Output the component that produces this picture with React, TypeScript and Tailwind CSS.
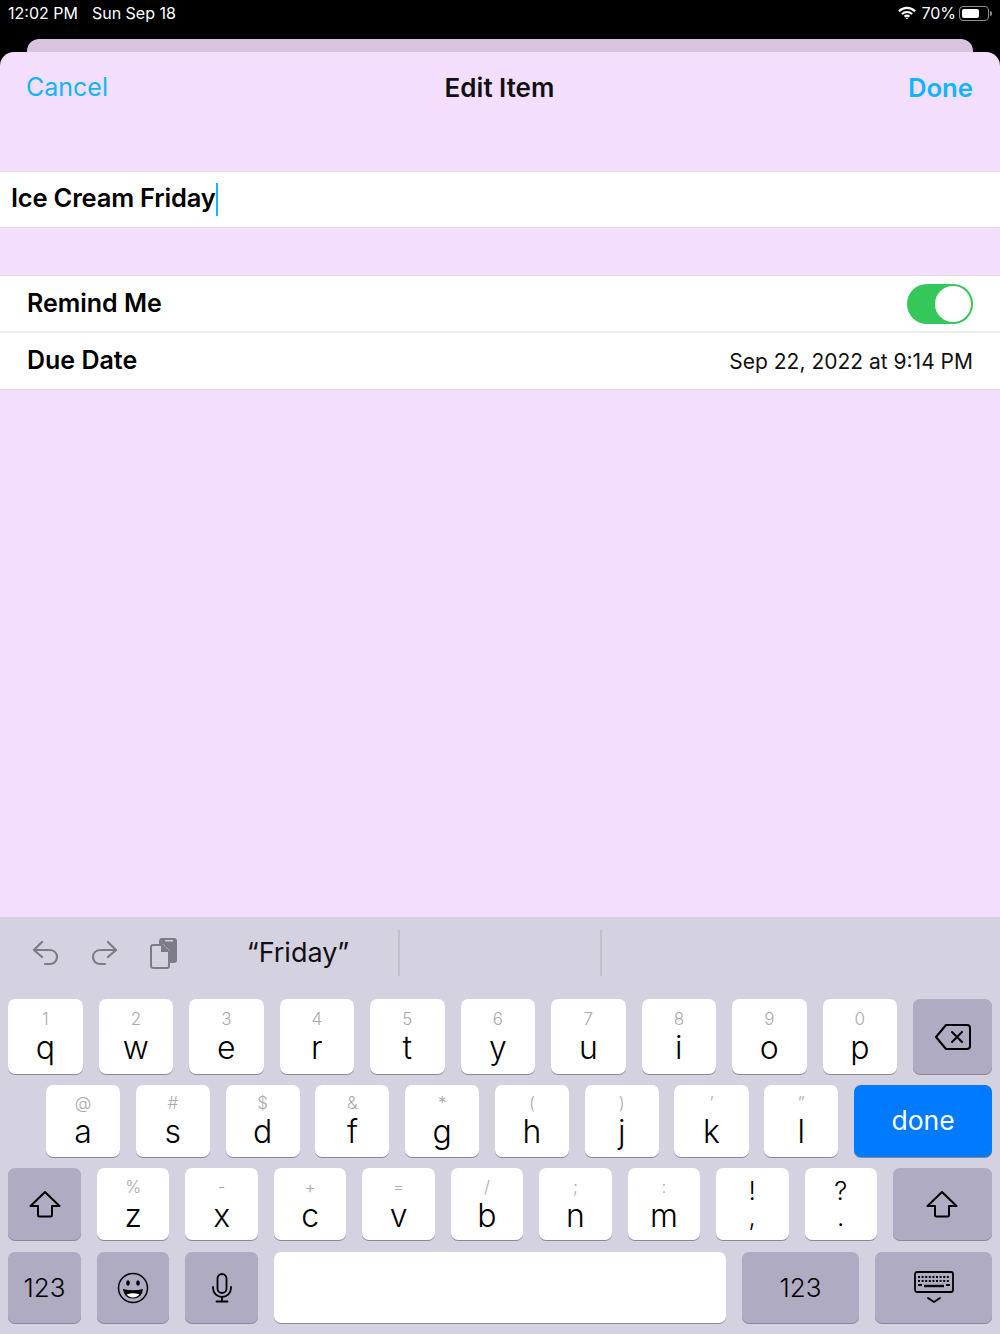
import { ReactNode } from "react";

const row1 = [["1", "q"], ["2", "w"], ["3", "e"], ["4", "r"], ["5", "t"], ["6", "y"], ["7", "u"], ["8", "i"], ["9", "o"], ["0", "p"]];
const row2 = [["@", "a"], ["#", "s"], ["$", "d"], ["&", "f"], ["*", "g"], ["(", "h"], [")", "j"], ["’", "k"], ["”", "l"]];
const row3 = [["%", "z"], ["-", "x"], ["+", "c"], ["=", "v"], ["/", "b"], [";", "n"], [":", "m"]];

function LetterKey({ hint, letter, box }: { hint: string; letter: string; box: string }) {
  return (
    <div className={`flex-1 ${box} bg-white rounded-[7px] shadow-[0_1px_0_#8a8898] flex flex-col items-center`}>
      <span className="text-[17px] leading-[22px] font-light text-[#a9a9ae]">{hint}</span>
      <span className="text-[32px] leading-[35px] font-light text-black">{letter}</span>
    </div>
  );
}

function GrayKey({ className, children }: { className: string; children: ReactNode }) {
  return (
    <div className={`${className} bg-[#aeabc2] rounded-[7px] shadow-[0_1px_0_#8a8898] flex items-center justify-center text-black`}>
      {children}
    </div>
  );
}

function ShiftIcon() {
  return (
    <svg width="32" height="28" viewBox="0 0 32 28" fill="none" stroke="#000" strokeWidth="2" strokeLinejoin="round">
      <path d="M16 2 L30.5 16 H23 V25 Q23 26.5 21.5 26.5 H10.5 Q9 26.5 9 25 V16 H1.5 Z" />
    </svg>
  );
}

export default function App() {
  return (
    <div className="w-[1000px] h-[1334px] overflow-hidden flex flex-col bg-black font-['Inter',sans-serif]">
      {/* status bar */}
      <div className="h-[26px] flex items-center justify-between pl-[8px] pr-[8px] text-white text-[16px]">
        <div className="flex gap-[14px]">
          <span>12:02 PM</span>
          <span>Sun Sep 18</span>
        </div>
        <div className="flex items-center gap-[5px]">
          <svg width="18" height="14" viewBox="0 0 18 14" fill="none" stroke="#fff" strokeWidth="2.2">
            <path d="M1 5.2 C5.5 0.8 12.5 0.8 17 5.2" />
            <path d="M3.9 8 C6.9 5.4 11.1 5.4 14.1 8" />
            <path d="M6.6 10.6 C8 9.5 10 9.5 11.4 10.6" />
            <circle cx="9" cy="12.4" r="0.8" fill="#fff" stroke="none" />
          </svg>
          <span className="mr-[-2px]">70%</span>
          <div className="flex items-center gap-[1px]">
            <div className="w-[30px] h-[15px] border border-[#8e8e8e] rounded-[4px] p-[2px]">
              <div className="w-[70%] h-full bg-white rounded-[2px]" />
            </div>
            <div className="w-[2px] h-[5px] bg-[#8e8e8e] rounded-r-[2px]" />
          </div>
        </div>
      </div>
      <div className="h-[13px]" />

      {/* card behind */}
      <div className="h-[13px] mx-[27px] bg-[#d8c4e0] rounded-t-[12px]" />

      {/* sheet */}
      <div className="flex-1 flex flex-col bg-[#f3dffd] rounded-t-[14px]">
        <div className="h-[119px] pl-[26px] pr-[27px] pt-[19px] flex items-start text-[25px] leading-[33px]">
          <span className="flex-1 text-[#10b5fe]">Cancel</span>
          <span className="font-semibold text-[#111] text-[26px]">Edit Item</span>
          <span className="flex-1 text-right font-semibold text-[25.7px] text-[#10b5fe]">Done</span>
        </div>

        <div className="h-[57px] bg-white border-y border-[#e6dbe9] flex items-center pl-[11px] pb-[2px]">
          <span className="text-[25.5px] font-semibold text-black tracking-[-0.2px]">Ice Cream Friday</span>
          <div className="w-[2px] h-[33px] bg-[#10b5fe] mt-[2px]" />
        </div>

        <div className="h-[47px]" />

        <div className="bg-white border-y border-[#e0d6e4]">
          <div className="h-[57px] pt-[1px] flex items-center justify-between px-[27px] border-b-2 border-[#ececec]">
            <span className="text-[25px] font-semibold text-black">Remind Me</span>
            <div className="w-[66px] h-[40px] rounded-full bg-[#34c759] flex items-center justify-end pr-[2px]">
              <div className="w-[36px] h-[36px] rounded-full bg-white" />
            </div>
          </div>
          <div className="h-[56px] flex items-center justify-between px-[27px]">
            <span className="text-[25px] font-semibold text-black">Due Date</span>
            <span className="text-[21px] text-[#111] mt-[1px]">Sep 22, 2022 at 9:14 PM</span>
          </div>
        </div>

        <div className="flex-1" />

        {/* keyboard */}
        <div className="h-[417px] bg-[#d4d2e0] flex flex-col">
          <div className="h-[82px] shrink-0 flex items-center pb-[10px]">
            <div className="w-[198px] pl-[32px] flex items-center gap-[32px]">
              <svg width="27" height="26" viewBox="0 0 27 26" fill="none" stroke="#7d7c85" strokeWidth="2.2" strokeLinecap="round" strokeLinejoin="round">
                <path d="M10 2 L2 10 L10 17" />
                <path d="M2 10 H17 C22 10 25 13 25 17 C25 21 22 24 18 24 H13" />
              </svg>
              <svg width="27" height="26" viewBox="0 0 27 26" fill="none" stroke="#7d7c85" strokeWidth="2.2" strokeLinecap="round" strokeLinejoin="round">
                <path d="M17 2 L25 10 L17 17" />
                <path d="M25 10 H10 C5 10 2 13 2 17 C2 21 5 24 9 24 H14" />
              </svg>
              <svg width="28" height="32" viewBox="0 0 28 32">
                <path d="M9 5 Q9 1 12 1 H24 Q27 1 27 4 V23 Q27 26 24 26 H20 V14 L13 7 H9 Z" fill="#7d7c85" />
                <rect x="15" y="3" width="8" height="1.5" fill="#d4d2e0" />
                <path d="M3 8 H12 L19 15 V29 Q19 31 17 31 H4 Q1 31 1 29 V10 Q1 8 3 8 Z" fill="none" stroke="#7d7c85" strokeWidth="2" />
                <path d="M11 8 V15 H19 Z" fill="#7d7c85" />
              </svg>
            </div>
            <div className="w-[200px] text-center text-[27px] text-[#111]">“Friday”</div>
            <div className="w-[2px] h-[46px] bg-[#c0bfca]" />
            <div className="w-[200px]" />
            <div className="w-[2px] h-[46px] bg-[#c0bfca]" />
          </div>

          <div className="flex-1 flex flex-col gap-[11px] px-[8px] pb-[11px]">
            <div className="flex gap-[15.8px]">
              {row1.map(([hint, letter]) => (
                <LetterKey key={letter} hint={hint} letter={letter} box="h-[75px] pt-[9px]" />
              ))}
              <GrayKey className="w-[79px] h-[75px]">
                <svg width="38" height="28" viewBox="0 0 38 28" fill="none" stroke="#000" strokeWidth="2" strokeLinejoin="round" strokeLinecap="round">
                  <path d="M12 2 H33 Q36 2 36 5 V23 Q36 26 33 26 H12 L2 14 Z" />
                  <path d="M18 9 L28 19 M28 9 L18 19" />
                </svg>
              </GrayKey>
            </div>
            <div className="flex gap-[15.7px] pl-[38px]">
              {row2.map(([hint, letter]) => (
                <LetterKey key={letter} hint={hint} letter={letter} box="h-[72px] pt-[7px]" />
              ))}
              <div className="w-[138px] h-[72px] bg-[#007aff] rounded-[7px] shadow-[0_1px_0_#8a8898] flex items-center justify-center text-white text-[26.5px]">
                done
              </div>
            </div>
            <div className="flex gap-[16px]">
              <GrayKey className="w-[73px] h-[72px]"><ShiftIcon /></GrayKey>
              {row3.map(([hint, letter]) => (
                <LetterKey key={letter} hint={hint} letter={letter} box="h-[72px] pt-[8px]" />
              ))}
              <div className="flex-1 h-[72px] bg-white rounded-[7px] shadow-[0_1px_0_#8a8898] flex flex-col items-center justify-center font-light text-black text-[26px] leading-[26px]">
                <span>!</span>
                <span>,</span>
              </div>
              <div className="flex-1 h-[72px] bg-white rounded-[7px] shadow-[0_1px_0_#8a8898] flex flex-col items-center justify-center font-light text-black text-[26px] leading-[26px]">
                <span>?</span>
                <span>.</span>
              </div>
              <GrayKey className="w-[99px] h-[72px]"><ShiftIcon /></GrayKey>
            </div>
            <div className="flex gap-[16px] mt-[1px]">
              <GrayKey className="w-[73px] h-[71px] text-[26px] font-light">123</GrayKey>
              <GrayKey className="w-[72px] h-[71px]">
                <svg width="32" height="32" viewBox="0 0 32 32" fill="none" stroke="#000" strokeWidth="1.5">
                  <circle cx="16" cy="16" r="14.5" />
                  <ellipse cx="11" cy="11" rx="1.8" ry="2.8" fill="#000" stroke="none" />
                  <ellipse cx="21" cy="11" rx="1.8" ry="2.8" fill="#000" stroke="none" />
                  <path d="M6 17 Q16 19.5 26 17 Q25 26.5 16 26.5 Q7 26.5 6 17 Z" fill="#000" stroke="none" />
                  <path d="M9.5 22.5 Q16 20 22.5 22.5 Q20 25.5 16 25.5 Q12 25.5 9.5 22.5 Z" fill="#fff" stroke="none" />
                </svg>
              </GrayKey>
              <GrayKey className="w-[73px] h-[71px]">
                <svg width="20" height="30" viewBox="0 0 20 30" fill="none" stroke="#000" strokeWidth="1.8" strokeLinecap="round">
                  <rect x="5.5" y="1" width="9" height="19" rx="4.5" />
                  <path d="M1 14 V15 C1 20 5 24 10 24 C15 24 19 20 19 15 V14" />
                  <path d="M10 24 V28.5 M4.5 28.5 H15.5" />
                </svg>
              </GrayKey>
              <div className="flex-1 h-[71px] bg-white rounded-[7px] shadow-[0_1px_0_#8a8898]" />
              <GrayKey className="w-[117px] h-[71px] text-[26px] font-light">123</GrayKey>
              <GrayKey className="w-[117px] h-[71px]">
                <svg width="40" height="34" viewBox="0 0 40 34" fill="none" stroke="#000">
                  <rect x="1" y="1" width="38" height="20" rx="2" strokeWidth="1.8" />
                  <path d="M4 6 H36 M4 10 H36" strokeWidth="2.2" strokeDasharray="2 1.6" />
                  <path d="M4 14 H8 M32 14 H36" strokeWidth="2.2" />
                  <path d="M10 15 H30" strokeWidth="2.4" />
                  <path d="M14 27 L20 31 L26 27" strokeWidth="1.8" strokeLinecap="round" strokeLinejoin="round" />
                </svg>
              </GrayKey>
            </div>
          </div>
        </div>
      </div>
    </div>
  );
}
